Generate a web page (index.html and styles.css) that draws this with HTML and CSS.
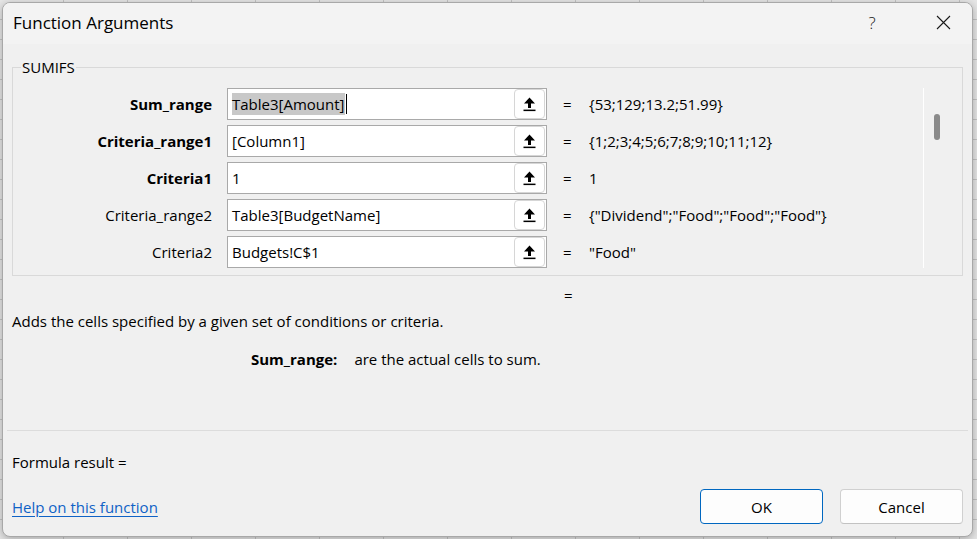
FILE: index.html
```html
<!DOCTYPE html>
<html lang="en">
<head>
<meta charset="utf-8">
<title>Function Arguments</title>
<link rel="stylesheet" href="styles.css">
</head>
<body>
<div class="sheet">
  <div class="dialog">
    <div class="titlebar">
      <span class="title">Function Arguments</span>
      <span class="help-btn">?</span>
      <span class="close-btn">
        <svg width="15" height="15" viewBox="0 0 15 15"><path d="M1 1 L14 14 M14 1 L1 14" stroke="#1a1a1a" stroke-width="1.1" fill="none"/></svg>
      </span>
    </div>

    <fieldset class="func-group">
      <legend class="func-name">SUMIFS</legend>
      <div class="arg-panel">
        <div class="arg-list">
          <div class="arg-row">
            <label class="arg-label required">Sum_range</label>
            <div class="arg-input"><span class="arg-text"><span class="selected">Table3[Amount]</span><span class="caret"></span></span><span class="collapse-btn"><svg width="13" height="15" viewBox="0 0 13 15"><polygon points="6.5,0.5 12,6.5 8,6.5 8,11 5,11 5,6.5 1,6.5" fill="#000"/><rect x="0.5" y="12.6" width="12" height="1.5" fill="#000"/></svg></span></div>
            <span class="arg-eq">=</span>
            <span class="arg-value">{53;129;13.2;51.99}</span>
          </div>
          <div class="arg-row">
            <label class="arg-label required">Criteria_range1</label>
            <div class="arg-input"><span class="arg-text">[Column1]</span><span class="collapse-btn"><svg width="13" height="15" viewBox="0 0 13 15"><polygon points="6.5,0.5 12,6.5 8,6.5 8,11 5,11 5,6.5 1,6.5" fill="#000"/><rect x="0.5" y="12.6" width="12" height="1.5" fill="#000"/></svg></span></div>
            <span class="arg-eq">=</span>
            <span class="arg-value">{1;2;3;4;5;6;7;8;9;10;11;12}</span>
          </div>
          <div class="arg-row">
            <label class="arg-label required">Criteria1</label>
            <div class="arg-input"><span class="arg-text">1</span><span class="collapse-btn"><svg width="13" height="15" viewBox="0 0 13 15"><polygon points="6.5,0.5 12,6.5 8,6.5 8,11 5,11 5,6.5 1,6.5" fill="#000"/><rect x="0.5" y="12.6" width="12" height="1.5" fill="#000"/></svg></span></div>
            <span class="arg-eq">=</span>
            <span class="arg-value">1</span>
          </div>
          <div class="arg-row">
            <label class="arg-label">Criteria_range2</label>
            <div class="arg-input"><span class="arg-text">Table3[BudgetName]</span><span class="collapse-btn"><svg width="13" height="15" viewBox="0 0 13 15"><polygon points="6.5,0.5 12,6.5 8,6.5 8,11 5,11 5,6.5 1,6.5" fill="#000"/><rect x="0.5" y="12.6" width="12" height="1.5" fill="#000"/></svg></span></div>
            <span class="arg-eq">=</span>
            <span class="arg-value">{"Dividend";"Food";"Food";"Food"}</span>
          </div>
          <div class="arg-row">
            <label class="arg-label">Criteria2</label>
            <div class="arg-input"><span class="arg-text">Budgets!C$1</span><span class="collapse-btn"><svg width="13" height="15" viewBox="0 0 13 15"><polygon points="6.5,0.5 12,6.5 8,6.5 8,11 5,11 5,6.5 1,6.5" fill="#000"/><rect x="0.5" y="12.6" width="12" height="1.5" fill="#000"/></svg></span></div>
            <span class="arg-eq">=</span>
            <span class="arg-value">"Food"</span>
          </div>
        </div>
        <div class="scrollbar"><div class="thumb"></div></div>
      </div>
    </fieldset>

    <div class="result-eq">=</div>
    <p class="description">Adds the cells specified by a given set of conditions or criteria.</p>
    <div class="arg-help">
      <span class="arg-help-name">Sum_range:</span>
      <span class="arg-help-text">are the actual cells to sum.</span>
    </div>

    <div class="spacer"></div>
    <div class="separator"></div>

    <div class="formula-result">Formula result =</div>

    <div class="footer">
      <a class="help-link" href="#">Help on this function</a>
      <div class="buttons">
        <button class="btn btn-default">OK</button>
        <button class="btn">Cancel</button>
      </div>
    </div>
  </div>
</div>
</body>
</html>
```

FILE: styles.css
```css
html, body {
  margin: 0;
  padding: 0;
}

body {
  width: 977px;
  height: 539px;
  overflow: hidden;
  font-family: "Open Sans", "Noto Sans", sans-serif;
  font-size: 15px;
  color: #000;
}

/* spreadsheet grid peeking out behind the dialog */
.sheet {
  height: 539px;
  padding: 2px 0 0 2px;
  box-sizing: border-box;
  background-color: #e6e6e6;
  background-image:
    repeating-linear-gradient(to bottom, transparent 0, transparent 19px, #c4c4c4 19px, #c4c4c4 20px),
    repeating-linear-gradient(to right, transparent 0, transparent 63px, #c4c4c4 63px, #c4c4c4 64px);
}

.dialog {
  width: 971px;
  height: 535px;
  box-sizing: border-box;
  background: #f0f0f0;
  border: 1px solid #a8a8a8;
  border-radius: 8px;
  box-shadow: 0 2px 8px rgba(0, 0, 0, 0.28);
  display: flex;
  flex-direction: column;
  overflow: hidden;
}

/* title bar */
.titlebar {
  height: 41px;
  flex: none;
  background: #f3f3f3;
  display: flex;
  align-items: center;
  padding-left: 10px;
}

.title {
  font-size: 17px;
  flex: 1;
  padding-bottom: 2px;
}

.help-btn {
  width: 40px;
  text-align: center;
  font-size: 17px;
  font-weight: 300;
  color: #1a1a1a;
  padding-bottom: 2px;
}

.close-btn {
  width: 58px;
  margin-left: 22px;
  display: flex;
  justify-content: center;
  padding-bottom: 2px;
}

/* argument group */
.func-group {
  margin: 13px 9px 0 9px;
  padding: 11px 0 7px 0;
  border: 1px solid #d9d9d9;
  min-width: 0;
}

.func-name {
  margin-left: 8px;
  padding: 0 1px;
  line-height: 20px;
}

.arg-panel {
  display: flex;
}

.arg-list {
  width: 910px;
  border-right: 1px solid #ffffff;
  display: flex;
  flex-direction: column;
  gap: 5px;
}

.arg-row {
  display: grid;
  grid-template-columns: 199px 335px 42px 1fr;
  align-items: center;
  height: 32px;
}

.arg-label {
  justify-self: end;
  white-space: nowrap;
}

.arg-input {
  margin-left: 15px;
  width: 320px;
  height: 32px;
  box-sizing: border-box;
  border: 1px solid #a9a9a9;
  background: #fff;
  display: flex;
  align-items: stretch;
}

.arg-text {
  flex: 1;
  padding-left: 4px;
  display: flex;
  align-items: center;
  white-space: nowrap;
}

.selected {
  background: #c8c8c8;
  padding: 1px 0;
}

.caret {
  display: inline-block;
  width: 1px;
  height: 20px;
  background: #000;
  margin-left: 1px;
}

.collapse-btn {
  width: 31px;
  box-sizing: border-box;
  margin-right: 1px;
  border: 1px solid #d6d6d6;
  border-radius: 4px;
  background: #fff;
  display: flex;
  align-items: center;
  justify-content: center;
}

.arg-eq {
  padding-left: 16px;
}

.arg-value {
  white-space: nowrap;
}

.required {
  font-weight: 700;
}

/* vertical scroll bar of the argument list */
.scrollbar {
  flex: 1;
  padding: 26px 0 0 10px;
}

.thumb {
  width: 6px;
  height: 26px;
  border-radius: 3px;
  background: #8a8a8a;
}

/* text below the group */
.result-eq {
  margin: 9px 0 0 561px;
  line-height: 20px;
}

.description {
  margin: 6px 0 0 9px;
  line-height: 20px;
}

.arg-help {
  margin: 18px 0 0 248px;
  line-height: 20px;
  display: flex;
  gap: 17px;
}

.arg-help-name {
  font-weight: 700;
}

.spacer {
  flex: 1;
}

.separator {
  height: 1px;
  background: #dcdcdc;
  margin: 0 4px;
}

.formula-result {
  margin: 21px 0 0 9px;
  line-height: 20px;
}

.footer {
  display: flex;
  align-items: center;
  justify-content: space-between;
  margin: 17px 9px 12px 9px;
}

.help-link {
  color: #0f62c6;
  text-decoration: underline;
  text-underline-offset: 3px;
  line-height: 20px;
  padding-top: 1px;
}

.buttons {
  display: flex;
  gap: 17px;
}

.btn {
  width: 123px;
  height: 35px;
  box-sizing: border-box;
  font-family: inherit;
  font-size: 15px;
  color: #000;
  background: #fdfdfd;
  border: 1px solid #d0d0d0;
  border-bottom-color: #c2c2c2;
  border-radius: 4px;
  padding: 0;
}

.btn-default {
  border: 1px solid #0067c0;
}
```
